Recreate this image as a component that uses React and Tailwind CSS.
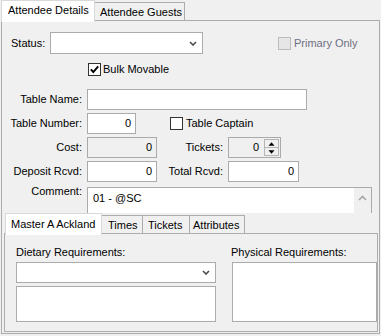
import React from "react";

function Check({ checked, disabled }) {
  return (
    <span
      className={
        disabled
          ? "w-[13px] h-[13px] shrink-0 border border-[#bcbcbc] bg-[#e6e6e6] flex items-center justify-center"
          : "w-[13px] h-[13px] shrink-0 border border-[#333333] bg-white flex items-center justify-center"
      }
    >
      {checked && (
        <svg width="11" height="11" viewBox="0 0 11 11">
          <path d="M1.8 5.4 L4.3 8 L9.2 2.3" stroke="#000" strokeWidth="1.9" fill="none" />
        </svg>
      )}
    </span>
  );
}

function Chevron() {
  return (
    <svg width="8" height="5" viewBox="0 0 8 5">
      <path d="M1 1 L4 4 L7 1" stroke="#4a4a4a" strokeWidth="1.6" fill="none" />
    </svg>
  );
}

function Label({ children, w = "w-[80px]" }) {
  return <span className={w + " text-right shrink-0"}>{children}</span>;
}

export default function App() {
  return (
    <div className="w-[381px] h-[336px] bg-[#f0f0f0] text-[11px] leading-[13px] text-black font-['Liberation_Sans',Arial,sans-serif] pl-px overflow-hidden">
      {/* Outer tabs */}
      <div className="flex items-start h-[20px]">
        <div className="relative z-10 h-[22px] w-[94px] bg-white border border-[#d9d9d9] border-b-0 pl-[6px] pt-[3px]">
          Attendee Details
        </div>
        <div className="mt-[2px] h-[18px] w-[90px] border border-[#acacac] border-l-0 border-b-0 bg-[#f0f0f0] pl-[5px] pt-[3px]">
          Attendee Guests
        </div>
      </div>

      {/* Outer panel */}
      <div className="w-[379px] h-[314px] border border-[#adadad] flex flex-col">
        {/* Status row */}
        <div className="flex items-center h-[22px] mt-[11px]">
          <span className="ml-[9px] w-[39px]">Status:</span>
          <div className="w-[153px] h-[22px] bg-white border border-[#ababab] flex items-center justify-end pr-[5px]">
            <Chevron />
          </div>
          <div className="ml-[75px] flex items-center gap-[3px] text-[#6f6f82]">
            <Check disabled />
            <span>Primary Only</span>
          </div>
        </div>

        {/* Bulk movable */}
        <div className="flex items-center h-[13px] mt-[9px] ml-[86px] gap-[2px]">
          <Check checked />
          <span>Bulk Movable</span>
        </div>

        {/* Table name */}
        <div className="flex items-center h-[21px] mt-[13px]">
          <Label>Table Name:</Label>
          <div className="ml-[5px] w-[220px] h-[21px] bg-white border border-[#ababab]" />
        </div>

        {/* Table number */}
        <div className="flex items-center h-[21px] mt-[3px]">
          <Label>Table Number:</Label>
          <div className="ml-[5px] w-[49px] h-[21px] bg-white border border-[#ababab] flex items-center justify-end pr-[4px]">
            0
          </div>
          <div className="ml-[34px] flex items-center gap-[3px]">
            <Check />
            <span>Table Captain</span>
          </div>
        </div>

        {/* Cost / Tickets */}
        <div className="flex items-center h-[21px] mt-[3px]">
          <Label>Cost:</Label>
          <div className="ml-[5px] w-[70px] h-[21px] bg-[#f0f0f0] border border-[#ababab] flex items-center justify-end pr-[4px]">
            0
          </div>
          <Label w="w-[66px]">Tickets:</Label>
          <div className="ml-[5px] w-[53px] h-[21px] bg-[#f0f0f0] border border-[#ababab] flex items-center justify-end pr-px">
            <span className="mr-[5px]">0</span>
            <div className="w-[15px] h-[17px] border border-[#b5b5b5] flex flex-col">
              <div className="flex-1 flex items-center justify-center border-b border-[#b5b5b5]">
                <svg width="7" height="4" viewBox="0 0 7 4">
                  <path d="M0.5 3.8 L3.5 0.3 L6.5 3.8 Z" fill="#000" />
                </svg>
              </div>
              <div className="flex-1 flex items-center justify-center">
                <svg width="7" height="4" viewBox="0 0 7 4">
                  <path d="M0.5 0.2 L3.5 3.7 L6.5 0.2 Z" fill="#000" />
                </svg>
              </div>
            </div>
          </div>
        </div>

        {/* Deposit / Total */}
        <div className="flex items-center h-[21px] mt-[3px]">
          <Label>Deposit Rcvd:</Label>
          <div className="ml-[5px] w-[70px] h-[21px] bg-white border border-[#ababab] flex items-center justify-end pr-[4px]">
            0
          </div>
          <Label w="w-[66px]">Total Rcvd:</Label>
          <div className="ml-[5px] w-[71px] h-[21px] bg-white border border-[#ababab] flex items-center justify-end pr-[4px]">
            0
          </div>
        </div>

        {/* Comment */}
        <div className="flex items-start h-[26px] mt-[5px]">
          <span className="w-[80px] text-right shrink-0 -mt-[2px]">Comment:</span>
          <div className="ml-[5px] w-[285px] h-[26px] bg-white border border-[#ababab] border-b-0 flex">
            <div className="flex-1 pl-[5px] pt-[4px]">01 - @SC</div>
            <div className="w-[17px] bg-[#f0f0f0] flex justify-center pt-[7px]">
              <svg width="9" height="6" viewBox="0 0 9 6">
                <path d="M1 5 L4.5 1.5 L8 5" stroke="#a6a6a6" strokeWidth="1.6" fill="none" />
              </svg>
            </div>
          </div>
        </div>

        {/* Inner tab control */}
        <div className="ml-[2px]">
          <div className="flex items-start h-[20px] pl-px">
            <div className="relative z-10 h-[22px] w-[97px] bg-white border border-[#d9d9d9] border-b-0 pl-[5px] pt-[4px]">
              Master A Ackland
            </div>
            <div className="mt-[2px] h-[18px] w-[41px] border border-[#acacac] border-l-0 border-b-0 pl-[6px] pt-[3px]">
              Times
            </div>
            <div className="mt-[2px] h-[18px] w-[47px] border border-[#acacac] border-l-0 border-b-0 pl-[5px] pt-[3px]">
              Tickets
            </div>
            <div className="mt-[2px] h-[18px] w-[55px] border border-[#acacac] border-l-0 border-b-0 pl-[3px] pt-[3px]">
              Attributes
            </div>
          </div>
          <div className="w-[374px] h-[99px] border border-[#adadad] flex items-start">
            <div className="ml-[11px] w-[200px] flex flex-col">
              <span className="mt-[12px] leading-[13px]">Dietary Requirements:</span>
              <div className="mt-[3px] h-[21px] bg-white border border-[#ababab] flex items-center justify-end pr-[5px]">
                <Chevron />
              </div>
              <div className="mt-[3px] h-[36px] bg-white border border-[#ababab]" />
            </div>
            <div className="ml-[16px] w-[145px] flex flex-col">
              <span className="mt-[12px] leading-[13px] -ml-px">Physical Requirements:</span>
              <div className="mt-[3px] h-[60px] bg-white border border-[#ababab]" />
            </div>
          </div>
        </div>
      </div>
    </div>
  );
}
